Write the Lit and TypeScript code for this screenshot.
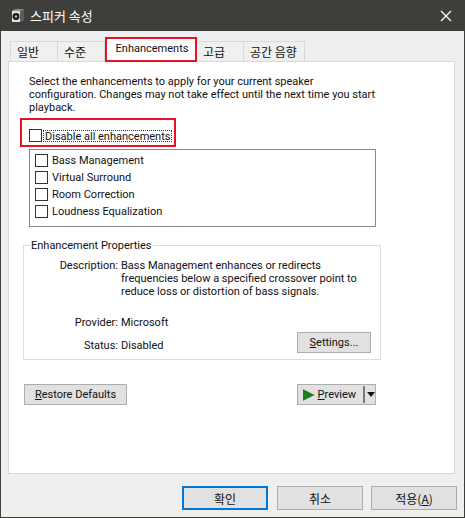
import { LitElement, html, css } from "lit";
import { customElement } from "lit/decorators.js";

@customElement("app-root")
export class AppRoot extends LitElement {
  static styles = css`
    :host {
      display: block;
      width: 465px;
      height: 518px;
      font: 11px/13px Roboto, "Noto Sans CJK KR", sans-serif;
      color: #111;
    }
    * { box-sizing: border-box; }
    .ko { font-family: "Noto Sans CJK KR", sans-serif; font-size: 12px; }
    .win {
      position: relative;
      width: 465px;
      height: 518px;
      background: #efefef;
      border: 1px solid #3f403c;
      border-top: 0;
      display: flex;
      flex-direction: column;
    }
    .title {
      height: 31px;
      margin: 0 -1px;
      background: #3e3f3b;
      color: #fff;
      display: flex;
      align-items: center;
      padding: 0 11px;
      flex: none;
    }
    .title span { margin-left: 5px; font-size: 13px; }
    .title .x { margin-left: auto; margin-right: 2px; }
    .tabs {
      display: flex;
      margin: 10px 0 0 9px;
      height: 20px;
      align-items: stretch;
      flex: none;
    }
    .tab {
      border: 1px solid #d9d9d9;
      border-bottom: 0;
      border-left-width: 0;
      display: flex;
      align-items: center;
      padding-left: 6px;
      background: #f0f0f0;
    }
    .tab:first-child { border-left-width: 1px; }
    .tab.active {
      background: #fff;
      margin-top: -3px;
      height: 24px;
      position: relative;
      z-index: 1;
      border: 0;
      justify-content: center;
      padding: 0 0 3px 2px;
    }
    .panel {
      width: 447px;
      height: 413px;
      margin-left: 7px;
      background: #fff;
      border: 1px solid #d9d9d9;
      padding: 13px 14px 0 14px;
      flex: none;
    }
    .intro { margin: 0 0 0 6px; width: 352px; }
    .check { display: flex; align-items: center; }
    .box {
      width: 13px;
      height: 13px;
      border: 1px solid #333;
      background: #fff;
      flex: none;
    }
    .disable { margin: 15px 0 0 6px; height: 13px; }
    .disable label {
      margin-left: 1px;
      border: 1px dotted #333;
      height: 12px;
      line-height: 11px;
      padding: 0 1px;
    }
    .list {
      margin: 7px 0 0 6px;
      width: 347px;
      height: 78px;
      border: 1px solid #8a8a8a;
      padding: 2px 5px;
      display: flex;
      flex-direction: column;
    }
    .list .check { height: 17px; }
    .list label { margin-left: 4px; }
    fieldset {
      margin: 12px 0 0 0;
      width: 358px;
      height: 121px;
      border: 1px solid #dcdcdc;
      padding: 0 0 0 7px;
      position: relative;
    }
    legend { padding: 0 1px 0 0; margin-left: 0; height: 13px; }
    .row { display: grid; grid-template-columns: 87px 1fr; column-gap: 3px; }
    .row > :first-child { text-align: right; }
    .row.desc { margin-top: 7px; }
    .row.provider { margin-top: 18px; }
    .row.status { margin-top: 10px; }
    button {
      font: inherit;
      color: inherit;
      background: #e1e1e1;
      border: 1px solid #adadad;
      padding: 0;
      margin: 0;
      display: flex;
      align-items: center;
      justify-content: center;
    }
    u { text-underline-offset: 1px; }
    .settings {
      position: absolute;
      left: 273px;
      top: 80px;
      width: 74px;
      height: 21px;
    }
    .actions {
      display: flex;
      justify-content: space-between;
      margin: 24px 0 0 1px;
      width: 352px;
    }
    .actions button { height: 21px; }
    .restore { width: 103px; }
    .preview { width: 79px; justify-content: flex-start; padding-left: 5px; }
    .preview .sep { width: 2px; height: 17px; background: #7a7a7a; margin-left: 7px; }
    .preview .drop {
      margin-left: 2px;
      width: 0;
      height: 0;
      border-left: 4px solid transparent;
      border-right: 4px solid transparent;
      border-top: 5px solid #111;
    }
    .preview svg { margin-right: 3px; }
    .footer {
      display: flex;
      margin: 12px 0 0 181px;
      gap: 9px;
    }
    .footer button { width: 86px; height: 24px; }
    .footer .gap { margin-left: -1px; }
    .footer .default { border: 2px solid #0078d7; }
    .red {
      position: absolute;
      border: 2px solid #e81123;
      pointer-events: none;
      z-index: 2;
    }
    .red.a { left: 104px; top: 37px; width: 92px; height: 25px; }
    .red.b { left: 19px; top: 118px; width: 156px; height: 29px; }
  `;

  render() {
    return html`
      <div class="win">
        <div class="title">
          <svg width="14" height="15" viewBox="0 0 14 15">
            <path d="M1 3 L4 1 H13 V12 L9 14 H1 Z" fill="#8f9090" />
            <path d="M9 3 L13 1 V12 L9 14 Z" fill="#5d5e5d" />
            <rect x="1" y="3" width="8" height="11" fill="#e0e0e0" />
            <circle cx="5" cy="8.5" r="3.4" fill="#161616" />
            <circle cx="5" cy="8.5" r="1.3" fill="#bdbdbd" />
          </svg>
          <span class="ko" style="font-size:13px">스피커 속성</span>
          <svg class="x" width="12" height="12" viewBox="0 0 12 12">
            <path d="M1 1 L11 11 M11 1 L1 11" stroke="#fff" stroke-width="1.2" fill="none" />
          </svg>
        </div>
        <div class="tabs">
          <div class="tab ko" style="width:48px">일반</div>
          <div class="tab ko" style="width:47px">수준</div>
          <div class="tab active" style="width:92px">Enhancements</div>
          <div class="tab ko" style="width:47px">고급</div>
          <div class="tab ko" style="width:61px">공간 음향</div>
        </div>
        <div class="panel">
          <p class="intro">Select the enhancements to apply for your current speaker configuration. Changes may not take effect until the next time you start playback.</p>
          <div class="check disable"><span class="box"></span><label>Disable all enhancements</label></div>
          <div class="list">
            <div class="check"><span class="box"></span><label>Bass Management</label></div>
            <div class="check"><span class="box"></span><label>Virtual Surround</label></div>
            <div class="check"><span class="box"></span><label>Room Correction</label></div>
            <div class="check"><span class="box"></span><label>Loudness Equalization</label></div>
          </div>
          <fieldset>
            <legend>Enhancement Properties</legend>
            <div class="row desc"><span>Description:</span><span>Bass Management enhances or redirects frequencies below a specified crossover point to reduce loss or distortion of bass signals.</span></div>
            <div class="row provider"><span>Provider:</span><span>Microsoft</span></div>
            <div class="row status"><span>Status:</span><span>Disabled</span></div>
            <button class="settings"><span><u>S</u>ettings...</span></button>
          </fieldset>
          <div class="actions">
            <button class="restore"><span><u>R</u>estore Defaults</span></button>
            <button class="preview">
              <svg width="12" height="12" viewBox="0 0 12 12"><path d="M0 0 L12 6 L0 12 Z" fill="#1e7d1e" /></svg>
              <span><u>P</u>review</span><span class="sep"></span><span class="drop"></span>
            </button>
          </div>
        </div>
        <div class="footer">
          <button class="default ko">확인</button>
          <button class="ko">취소</button>
          <button class="gap ko">적용(<u>A</u>)</button>
        </div>
        <div class="red a"></div>
        <div class="red b"></div>
      </div>
    `;
  }
}
